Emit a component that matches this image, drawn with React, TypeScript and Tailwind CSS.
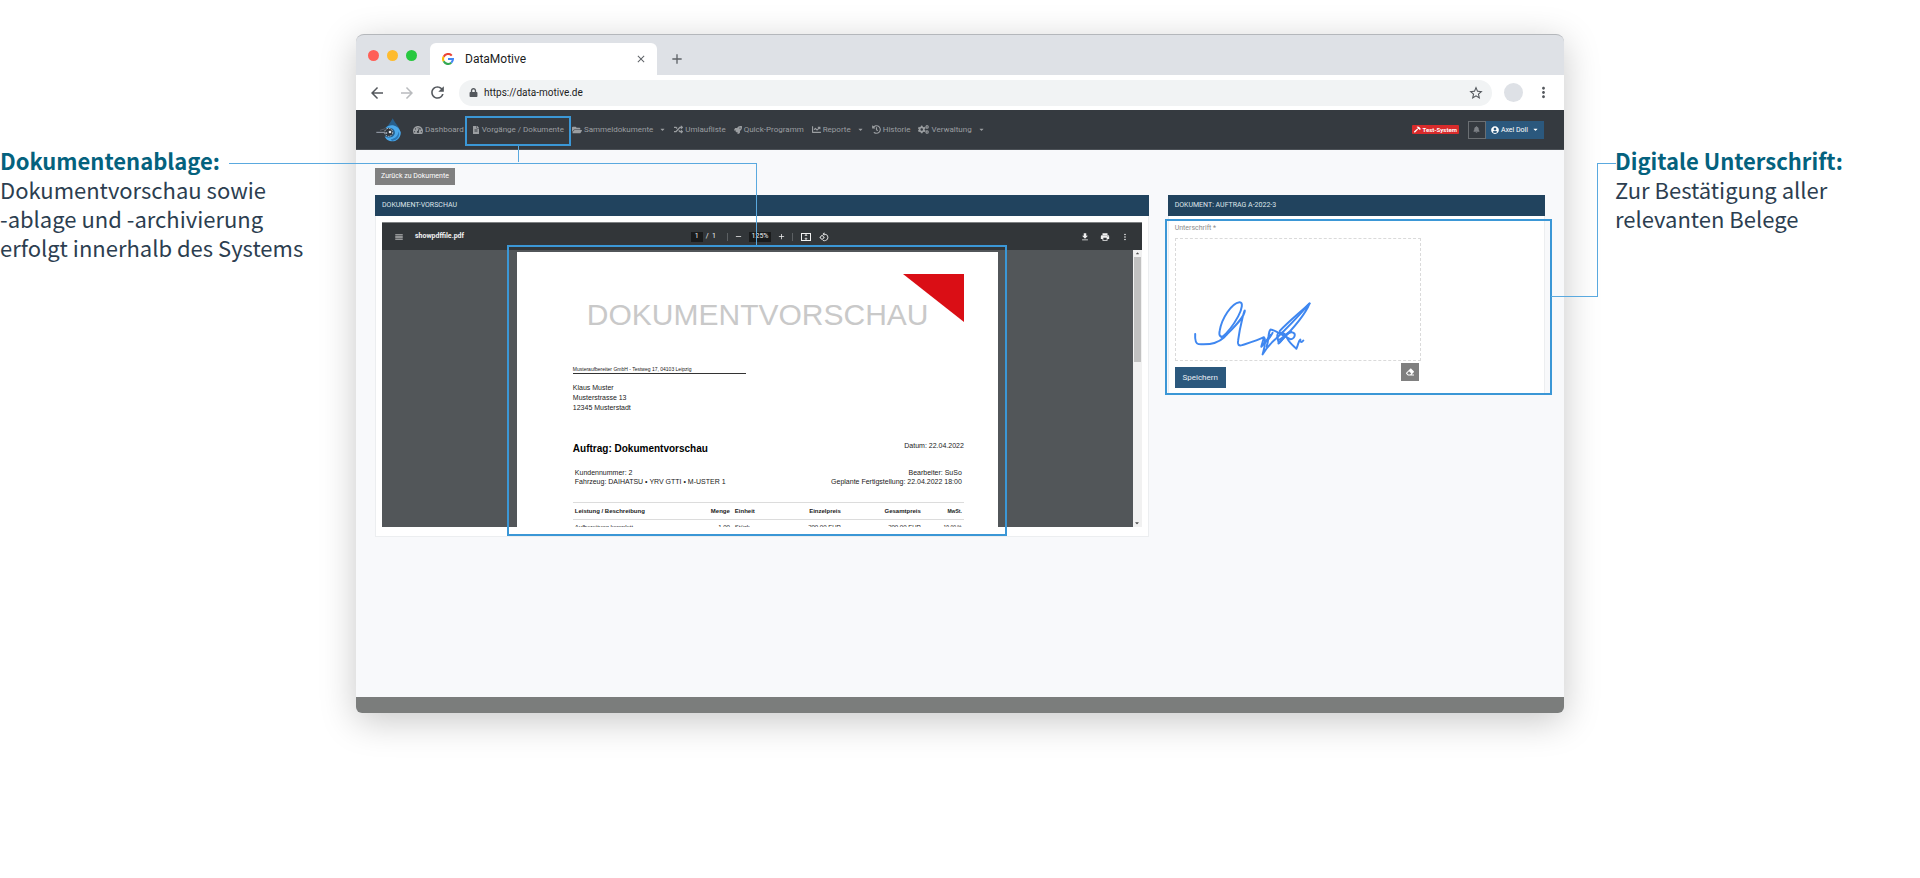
import React from "react";
import {
  FaTachometerAlt, FaFileAlt, FaFolderOpen, FaRandom, FaRocket, FaChartLine, FaHistory,
  FaCogs, FaHammer, FaBell, FaUserCircle, FaEraser, FaCaretDown, FaLock,
} from "react-icons/fa";
import {
  MdArrowBack, MdArrowForward, MdRefresh, MdStarBorder, MdMoreVert, MdMenu,
  MdFileDownload, MdPrint, MdOutlineRotate90DegreesCcw, MdClose, MdAdd, MdRemove,
} from "react-icons/md";

function GoogleMark() {
  return (
    <svg viewBox="0 0 24 24" className="size-3 shrink-0" fill="none" strokeWidth="4.200" aria-hidden="true">
      <path d="M19.500 5.200 A10 10 0 0 0 3.300 7.300" stroke="#ea4335" />
      <path d="M3.300 7.300 A10 10 0 0 0 3.300 16.700" stroke="#fbbc05" />
      <path d="M3.300 16.700 A10 10 0 0 0 18.600 19.500" stroke="#34a853" />
      <path d="M18.600 19.500 A10 10 0 0 0 21.900 12 H12" stroke="#4285f4" />
    </svg>
  );
}

function Logo() {
  return (
    <svg viewBox="0 0 75 72" className="h-6 w-[25px] shrink-0" aria-label="DataMotive">
      <path d="M50 1 C58 18 73 28 73 46 A23 23 0 0 1 27 46 C27 28 42 18 50 1Z" fill="#285f8c" />
      <path d="M28 30 C42 16 66 20 74 42 C76 58 62 70 50 70 C38 70 29 64 26 54 C36 62 52 60 56 48 C59 38 52 31 44 30 C38 29 32 30 28 30Z" fill="#4aa9ec" />
      <path d="M44 64 C58 62 66 54 68 40 C74 54 62 68 48 69Z" fill="#2b79b8" />
      <circle cx="38" cy="43" r="12" fill="#30363c" stroke="#b9c0c6" strokeWidth="3" strokeDasharray="5 3" />
      <circle cx="42" cy="42" r="4" fill="#e5e7eb" />
      <circle cx="31" cy="45" r="3" fill="#9ca3af" />
      <path d="M1 43 H25" stroke="#9ca3af" strokeWidth="3" />
      <path d="M12 37 L28 32" stroke="#6b7280" strokeWidth="2" />
    </svg>
  );
}

function Signature() {
  return (
    <svg viewBox="0 0 734 366" className="block h-full w-full" fill="none" stroke="#3f87f0" strokeWidth="6" strokeLinecap="round" strokeLinejoin="round" aria-label="Unterschrift">
      <path d="M56 287 C55 304 57 316 66 318 C100 321 124 316 143 298 C172 268 204 238 206 218 C207 206 192 260 186 306 C183 320 188 324 198 321 C220 314 244 307 264 297 C262 306 258 318 256 326 C268 314 276 302 284 290" />
      <path d="M150 290 C132 300 127 294 130 278 C136 240 166 194 190 191 C202 190 198 212 186 234 C174 256 156 282 136 298" />
      <path d="M266 300 C270 318 264 336 260 349 C272 328 286 314 300 302 C332 272 368 234 402 195 C388 232 352 272 308 316" />
      <path d="M402 195 C376 220 340 248 312 278 M272 326 C280 302 276 280 284 274 C300 276 322 294 344 303 C352 304 360 294 356 286 C348 278 334 284 326 296 C318 306 310 318 308 312 C306 300 300 286 310 284 C326 282 330 290 334 300 C342 316 356 326 362 332 C368 320 368 308 374 304 C374 314 378 314 383 307" />
      <path d="M290 284 C284 296 276 306 268 312 M308 306 C322 300 332 284 346 280" />
    </svg>
  );
}

function FitPageIcon() {
  return (
    <svg viewBox="0 0 20 16" className="h-2 w-[10px]" fill="none" stroke="currentColor" strokeWidth="2">
      <rect x="1" y="1" width="18" height="14" />
      <path d="M10 1 V15" strokeWidth="1.500" strokeDasharray="5 3" />
      <path d="M7.500 6 L10 3.500 L12.500 6 M7.500 10 L10 12.500 L12.500 10" strokeWidth="1.500" />
    </svg>
  );
}

type NavEntry = { label: string; icon: React.ReactNode; menu?: boolean; marked?: boolean };

const navEntries: NavEntry[] = [
  { label: "Dashboard", icon: <FaTachometerAlt size={10} /> },
  { label: "Vorgänge / Dokumente", icon: <FaFileAlt size={8} />, marked: true },
  { label: "Sammeldokumente", icon: <FaFolderOpen size={10} />, menu: true },
  { label: "Umlaufliste", icon: <FaRandom size={9} /> },
  { label: "Quick-Programm", icon: <FaRocket size={8} /> },
  { label: "Reporte", icon: <FaChartLine size={9} />, menu: true },
  { label: "Historie", icon: <FaHistory size={9} /> },
  { label: "Verwaltung", icon: <FaCogs size={11} />, menu: true },
];

function BrowserChrome() {
  return (
    <header>
      <div className="flex h-[41px] items-end rounded-t-lg border-t border-[#b4b7bb] bg-[#dee1e6]">
        <div className="flex h-full w-[74px] items-center gap-2 pl-3">
          <span className="size-[11px] rounded-full bg-[#ff5f57]" />
          <span className="size-[11px] rounded-full bg-[#febb2e]" />
          <span className="size-[11px] rounded-full bg-[#28c840]" />
        </div>
        <div className="flex h-8 w-[227px] items-center rounded-t-md bg-white pr-[10px] pl-3">
          <GoogleMark />
          <span className="ml-[11px] flex-1 text-xs text-[#1c1c1c]">DataMotive</span>
          <button aria-label="Tab schließen" className="text-[#5f6368]"><MdClose size={12} stroke="currentColor" /></button>
        </div>
        <button aria-label="Neuer Tab" className="mb-2 ml-3 text-[#5f6368]"><MdAdd size={16} stroke="currentColor" /></button>
      </div>
      <div className="flex h-[35px] items-center bg-white pr-3 pl-3 text-[#54585d]">
        <button aria-label="Zurück" className="mr-3"><MdArrowBack size={18} /></button>
        <button aria-label="Vor" className="mr-3 text-[#b9bbbe]"><MdArrowForward size={18} /></button>
        <button aria-label="Neu laden"><MdRefresh size={19} /></button>
        <div className="ml-3 flex h-[26px] flex-1 items-center rounded-full bg-[#f1f3f4] pr-2 pl-[10px]">
          <FaLock size={9} />
          <input aria-label="Adresse" readOnly value="https://data-motive.de" className="ml-[6px] w-full flex-1 bg-transparent text-[10px] text-[#1c1c1c] outline-none" />
          <button aria-label="Lesezeichen"><MdStarBorder size={16} /></button>
        </div>
        <span className="ml-3 size-[19px] rounded-full bg-[#dee1e6]" />
        <button aria-label="Menü" className="ml-3"><MdMoreVert size={17} stroke="currentColor" /></button>
      </div>
    </header>
  );
}

function Navbar() {
  return (
    <nav className="flex h-10 items-center border-b border-[#4c5157] bg-[#353a40] pr-5 pl-5 text-[8px] leading-3 text-[#9b9ea1]">
      <Logo />
      <ul className="ml-3 flex flex-1 items-center gap-2">
        {navEntries.map((entry) => (
          <li key={entry.label} className="relative">
            <a href="#" className="flex items-center gap-[2px] whitespace-nowrap">
              {entry.icon}
              {entry.label}
              {entry.menu && <FaCaretDown size={7} className="ml-1" />}
            </a>
            {entry.marked && (
              <span className="pointer-events-none absolute -inset-x-[7px] -top-2 h-[30px] border-2 border-[#3b97d6]">
                <span className="absolute top-full left-1/2 mt-[2px] h-4 w-px bg-[#5aa9df]" />
              </span>
            )}
          </li>
        ))}
      </ul>
      <span className="mr-[9px] flex h-[9px] items-center gap-px rounded-[1px] bg-[#d92b2b] px-[2px] text-[6px] font-bold text-white">
        <FaHammer size={7} />
        Test-System
      </span>
      <button aria-label="Benachrichtigungen" className="flex h-[18px] w-[18px] items-center justify-center border border-[#6b6f73] text-[#7d8186]">
        <FaBell size={7} />
      </button>
      <button className="flex h-[18px] items-center gap-[2px] bg-[#2b587d] px-[5px] text-[7px] text-white">
        <FaUserCircle size={8} />
        Axel Doll
        <FaCaretDown size={7} className="ml-[2px]" />
      </button>
    </nav>
  );
}

function PdfToolbar() {
  return (
    <div className="grid h-7 grid-cols-[1fr_auto_1fr] items-center border-t border-[#7e8183] bg-[#323639] px-3 text-[7px] text-[#f1f1f1]">
      <div className="flex items-center gap-[11px]">
        <button aria-label="Seitenleiste"><MdMenu size={10} /></button>
        <span className="font-bold">showpdffile.pdf</span>
      </div>
      <div className="flex items-center">
        <input aria-label="Seite" readOnly value="1" className="h-[10px] w-3 bg-[#191b1c] text-center" />
        <span className="ml-[3px]">/&nbsp; 1</span>
        <span className="mr-[6px] ml-[11px] h-2 w-px bg-[#5c6063]" />
        <button aria-label="Verkleinern"><MdRemove size={9} /></button>
        <input aria-label="Zoom" readOnly value="125%" className="mx-[6px] h-[10px] w-[22px] bg-[#191b1c] text-center" />
        <button aria-label="Vergrößern"><MdAdd size={9} /></button>
        <span className="mr-2 ml-[6px] h-2 w-px bg-[#5c6063]" />
        <button aria-label="An Seite anpassen"><FitPageIcon /></button>
        <button aria-label="Drehen" className="mr-1 ml-2"><MdOutlineRotate90DegreesCcw size={10} /></button>
      </div>
      <div className="flex items-center justify-end gap-[10px]">
        <button aria-label="Herunterladen"><MdFileDownload size={10} /></button>
        <button aria-label="Drucken"><MdPrint size={10} /></button>
        <button aria-label="Weitere Aktionen"><MdMoreVert size={10} /></button>
      </div>
    </div>
  );
}

function DocumentPage() {
  return (
    <article className="mt-[2px] h-[275px] w-[481px] shrink-0 overflow-hidden bg-white pt-[22px] pr-[34px] pl-14 font-['Liberation_Sans',Arial,sans-serif] text-[7px] leading-[9px] text-[#1a1a1a]">
      <div className="relative h-[86px]">
        <svg viewBox="0 0 61 48" className="absolute top-0 right-0 h-12 w-[61px]">
          <path d="M0 0 H61 V48Z" fill="#da0e15" />
        </svg>
        <h2 className="relative pt-[22px] pl-[14px] text-[30px] leading-[38px] text-[#c9c9c9]">DOKUMENTVORSCHAU</h2>
      </div>
      <div className="w-[173px] border-b border-[#333] pt-[6px] pb-px text-[5px] leading-[6px]">Musteraufbereiter GmbH - Testweg 17, 04103 Leipzig</div>
      <address className="pt-[9px] leading-[10px] not-italic">
        Klaus Muster<br />Musterstrasse 13<br />12345 Musterstadt
      </address>
      <div className="mt-7 flex items-start justify-between">
        <h3 className="pt-[2px] text-[10px] leading-3 font-bold text-black">Auftrag: Dokumentvorschau</h3>
        <span>Datum: 22.04.2022</span>
      </div>
      <div className="mt-[13px] flex justify-between px-[2px]">
        <p>Kundennummer: 2<br />Fahrzeug: DAIHATSU • YRV GTTI • M-USTER 1</p>
        <p className="text-right">Bearbeiter: SuSo<br />Geplante Fertigstellung: 22.04.2022 18:00</p>
      </div>
      <table className="mt-4 w-full table-fixed border-t border-[#dcdcdc] text-[6px]">
        <colgroup>
          <col className="w-[105px]" /><col className="w-[54px]" /><col className="w-[35px]" /><col /><col className="w-20" /><col className="w-[41px]" />
        </colgroup>
        <thead>
          <tr className="h-[17px] border-b border-[#dcdcdc]">
            <th className="pl-[2px] text-left">Leistung / Beschreibung</th>
            <th className="pr-[2px] text-right">Menge</th>
            <th className="pl-[3px] text-left">Einheit</th>
            <th className="pr-[2px] text-right">Einzelpreis</th>
            <th className="pr-[2px] text-right">Gesamtpreis</th>
            <th className="pr-[2px] text-right text-[5px]">MwSt.</th>
          </tr>
        </thead>
        <tbody>
          <tr className="h-[17px] align-top leading-[8px]">
            <td className="pt-[3px] pl-[2px]">Aufbereitung komplett</td>
            <td className="pt-[3px] pr-[2px] text-right">1,00</td>
            <td className="pt-[3px] pl-[3px]">Stück</td>
            <td className="pt-[3px] pr-[2px] text-right">200,00 EUR</td>
            <td className="pt-[3px] pr-[2px] text-right">200,00 EUR</td>
            <td className="pt-[3px] pr-[2px] text-right text-[5px]">19,00 %</td>
          </tr>
        </tbody>
      </table>
    </article>
  );
}

function PreviewPanel() {
  return (
    <section className="border border-[#eceef0] bg-white">
      <h2 className="-mx-px -mt-px flex h-[21px] items-center bg-[#21435e] px-[7px] text-[7px] text-[#dfe5ea]">DOKUMENT-VORSCHAU</h2>
      <div className="px-[6px] pt-[6px] pb-[9px]">
        <PdfToolbar />
        <div className="relative flex h-[277px] bg-[#525659]">
          <div className="flex flex-1 justify-center overflow-hidden">
            <DocumentPage />
          </div>
          <div className="flex w-[9px] flex-col items-center bg-[#f1f1f1] text-[#505050]">
            <FaCaretDown size={5} className="my-px rotate-180" />
            <span className="h-[105px] w-[7px] bg-[#c1c1c1]" />
            <FaCaretDown size={6} className="mt-auto mb-px" />
          </div>
          <span className="pointer-events-none absolute -top-[5px] left-1/2 h-[291px] w-[500px] -translate-x-[255px] border-2 border-[#3b97d6]" />
        </div>
      </div>
    </section>
  );
}

function SignaturePanel() {
  return (
    <section className="relative self-start border border-[#eceef0] bg-white">
      <h2 className="-mx-px -mt-px flex h-[21px] items-center bg-[#21435e] px-[7px] text-[7px] text-[#dfe5ea]">DOKUMENT: AUFTRAG A-2022-3</h2>
      <div className="px-[6px] pt-[7px] pb-[5px]">
        <p className="text-[7px] leading-[10px] text-[#8b8b8b]">Unterschrift *</p>
        <div className="mt-[5px] h-[123px] w-[246px] border border-dashed border-[#dadada]">
          <Signature />
        </div>
        <div className="flex w-[246px] items-start justify-between pt-[2px] pr-[2px]">
          <button className="mt-1 h-[21px] w-[51px] bg-[#2b587d] text-[8px] text-[#e8edf2]">Speichern</button>
          <button aria-label="Unterschrift löschen" className="flex size-[18px] items-center justify-center bg-[#808080] text-white"><FaEraser size={8} /></button>
        </div>
      </div>
      <span className="pointer-events-none absolute -right-2 -left-1 top-[23px] h-[176px] border-2 border-[#3b97d6]" />
    </section>
  );
}

export default function App() {
  return (
    <div className="min-h-screen bg-white font-[Roboto,sans-serif]">
      <div className="relative grid grid-cols-[356px_minmax(0,1fr)_356px] pt-[34px]">
        <aside className="pt-28 font-['Noto_Sans_CJK_SC',sans-serif] text-[22px] leading-[29px] text-[#2c3e50]">
          <h1 className="font-bold text-[#04627e]">Dokumentenablage:</h1>
          <p>Dokumentvorschau sowie<br />-ablage und -archivierung<br />erfolgt innerhalb des Systems</p>
        </aside>

        <div className="rounded-t-lg rounded-b-md bg-[#f8f9fb] shadow-[0_8px_36px_rgba(0,0,0,0.22)]">
          <BrowserChrome />
          <Navbar />
          <main className="min-h-[547px] px-[19px] pt-[18px]">
            <button className="block h-[17px] bg-[#808080] px-[6px] text-[7px] text-white">Zurück zu Dokumente</button>
            <div className="mt-[10px] grid grid-cols-[773fr_377fr] gap-[19px]">
              <PreviewPanel />
              <SignaturePanel />
            </div>
          </main>
          <footer className="h-4 rounded-b-md bg-[#7b7d7c]" />
        </div>

        <aside className="pt-28 pl-[51px] font-['Noto_Sans_CJK_SC',sans-serif] text-[22px] leading-[29px] text-[#2c3e50]">
          <h1 className="font-bold text-[#04627e]">Digitale Unterschrift:</h1>
          <p>Zur Bestätigung aller<br />relevanten Belege</p>
        </aside>

        <span className="pointer-events-none absolute top-[163px] left-[229px] h-[82px] w-[528px] border-t border-r border-[#5aa9df]" />
        <span className="pointer-events-none absolute top-[163px] right-[304px] h-[134px] w-[19px] border-t border-l border-[#5aa9df]" />
        <span className="pointer-events-none absolute top-[296px] right-[323px] h-px w-[46px] bg-[#5aa9df]" />
      </div>
    </div>
  );
}
